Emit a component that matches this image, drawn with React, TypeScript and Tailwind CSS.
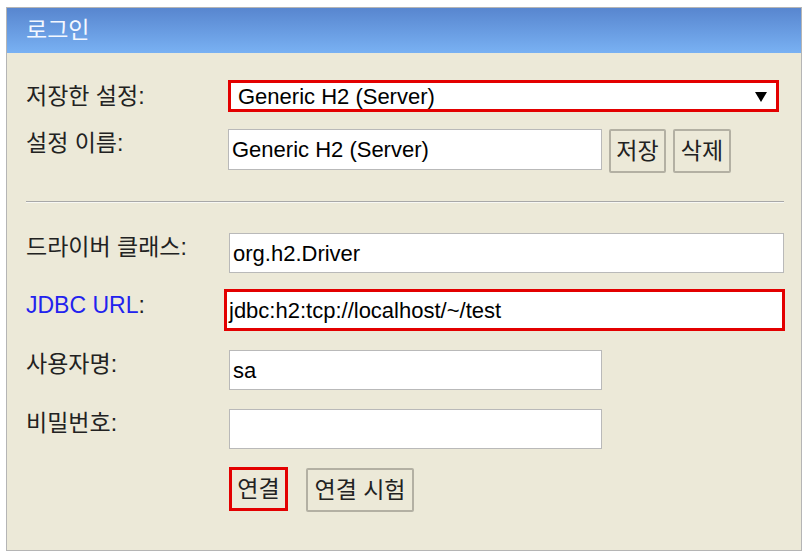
const font = { fontFamily: '"Liberation Sans", "Noto Sans CJK KR", sans-serif' }

function Label({ children, className = '' }: { children: React.ReactNode; className?: string }) {
  return <div className={`w-[203px] shrink-0 text-[23px] leading-none text-[#222] ${className}`}>{children}</div>
}

function TextBox({ value, className = '' }: { value: string; className?: string }) {
  return (
    <div className={`h-[40px] bg-white border border-[#b9b9b9] flex items-center pl-[3px] text-[22px] text-black ${className}`}>
      {value}
    </div>
  )
}

function Btn({ children, red = false, className = '' }: { children: React.ReactNode; red?: boolean; className?: string }) {
  return (
    <div
      className={`h-[44px] flex items-center justify-center text-[23px] text-[#222] bg-[#ece9d8] rounded-[2px] ${
        red ? 'border-[3px] border-[#e30000] rounded-none' : 'border-2 border-[#b3b0a3]'
      } ${className}`}
    >
      {children}
    </div>
  )
}

export default function App() {
  return (
    <div className="w-[809px] h-[557px] bg-white pt-[7px] pl-[6px]" style={font}>
      <div className="w-[796px] h-[544px] border border-[#b5b5b5] bg-[#ece9d8] flex flex-col">
        <div className="h-[45px] bg-gradient-to-b from-[#5886cf] to-[#79b1f3] flex items-center pl-[19px] text-[23px] text-[#f4f8ff]">
          로그인
        </div>
        <div className="pl-[19px] flex flex-col">
          <div className="mt-[27px] flex items-center h-[32px]">
            <Label>저장한 설정:</Label>
            <div className="-ml-[1px] w-[551px] h-[32px] bg-white border-[3px] border-[#e30000] flex items-center pl-[7px] pr-[8px] text-[22px] text-black">
              <span className="flex-1">Generic H2 (Server)</span>
              <svg width="14" height="12" viewBox="0 0 14 12" className="mt-[1px]">
                <path d="M1 1h12L7 11z" fill="#000" />
              </svg>
            </div>
          </div>
          <div className="mt-[17px] flex items-start h-[43px]">
            <Label className="mt-[3px]">설정 이름:</Label>
            <TextBox value="Generic H2 (Server)" className="-ml-[1px] w-[374px] h-[41px]" />
            <Btn className="ml-[7px] w-[57px] h-[43px]">저장</Btn>
            <Btn className="ml-[7px] w-[58px] h-[43px]">삭제</Btn>
          </div>
          <div className="mt-[29px] h-[2px] w-[758px] border-t border-[#a8a8a8] border-b border-b-[#f8f8f4]" />
          <div className="mt-[30px] flex items-start h-[40px]">
            <Label className="mt-[3px]">드라이버 클래스:</Label>
            <TextBox value="org.h2.Driver" className="w-[555px]" />
          </div>
          <div className="mt-[16px] flex items-start h-[42px]">
            <Label className="mt-[5px] text-[#2222ee] text-[22px]">
              JDBC URL<span className="text-[#222]">:</span>
            </Label>
            <div className="-ml-[5px] w-[561px] h-[42px] bg-white border-[3px] border-[#e30000] flex items-center pl-[2px] text-[22px] text-black">
              jdbc:h2:tcp://localhost/~/test
            </div>
          </div>
          <div className="mt-[19px] flex items-start h-[40px]">
            <Label className="mt-[3px]">사용자명:</Label>
            <TextBox value="sa" className="w-[373px]" />
          </div>
          <div className="mt-[19px] flex items-start h-[40px]">
            <Label className="mt-[3px]">비밀번호:</Label>
            <TextBox value="" className="w-[373px]" />
          </div>
          <div className="mt-[18px] flex items-start">
            <div className="w-[203px] shrink-0" />
            <Btn red className="w-[59px]">연결</Btn>
            <Btn className="ml-[18px] w-[108px] h-[43px] mt-[1px]">연결 시험</Btn>
          </div>
        </div>
      </div>
    </div>
  )
}
